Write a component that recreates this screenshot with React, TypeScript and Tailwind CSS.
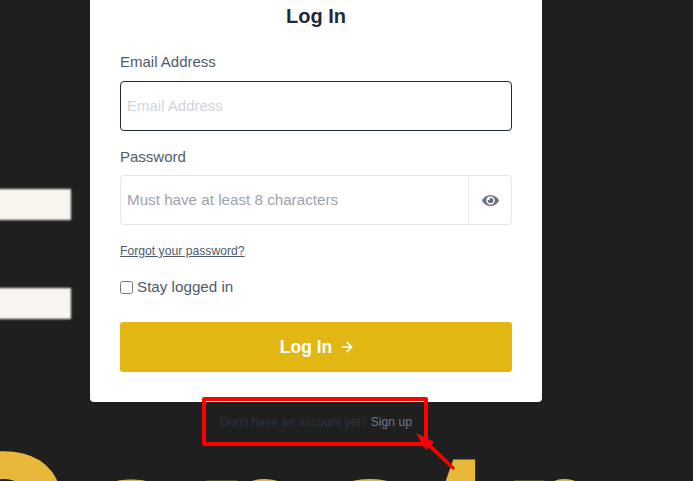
import { ArrowRight } from "lucide-react";

export default function App() {
  return (
    <div className="relative h-[481px] w-[693px] overflow-hidden bg-[#1f1f1f] font-['Liberation_Sans',sans-serif]">
      {/* blurred page behind the dialog */}
      <div className="absolute left-[-10px] top-[189px] h-[31px] w-[81px] bg-[#f9f4ee] blur-[0.8px]" />
      <div className="absolute left-[-10px] top-[288px] h-[31px] w-[81px] bg-[#f9f4ee] blur-[0.8px]" />
      <div className="absolute left-[-64px] top-[429px] whitespace-nowrap text-[175px] leading-none font-bold tracking-[15px] text-[#e8b83a] blur-[0.7px] [-webkit-text-stroke:8px_#e8b83a]">
        Construction
      </div>

      <div className="relative ml-[90px] flex h-[402px] w-[452px] flex-col rounded-b bg-white px-[30px] text-[#4f5b6b]">
        <h1 className="mt-[3px] text-center text-[20px] leading-[26px] font-semibold text-[#1f2937]">Log In</h1>

        <label className="mt-[23px] text-[15px] leading-[20px]">Email Address</label>
        <div className="mt-[9px] flex h-[50px] items-center rounded border border-[#1f2937] px-[6px] text-[15px] text-[#d1d5db]">
          Email Address
        </div>

        <label className="mt-[16px] text-[15px] leading-[20px]">Password</label>
        <div className="mt-[8px] flex h-[50px] rounded border border-[#e5e7eb] text-[15.2px] text-[#9ca3af]">
          <div className="flex flex-1 items-center px-[6px] pt-[1px]">Must have at least 8 characters</div>
          <div className="flex w-[43px] items-center justify-center border-l border-[#e5e7eb]">
            <svg viewBox="0 0 576 512" className="h-[15px] w-[19px] fill-[#6b7280]">
              <path d="M572.5 241.4C518.3 135.6 410.9 64 288 64S57.7 135.6 3.5 241.4a32.4 32.4 0 0 0 0 29.2C57.7 376.4 165.1 448 288 448s230.3-71.6 284.5-177.4a32.4 32.4 0 0 0 0-29.2zM288 400a144 144 0 1 1 144-144 143.9 143.9 0 0 1-144 144zm0-240a95.3 95.3 0 0 0-25.3 3.8 47.9 47.9 0 0 1-66.9 66.9A95.8 95.8 0 1 0 288 160z" />
            </svg>
          </div>
        </div>

        <a className="mt-[18px] self-start text-[12.2px] leading-[16px] underline">Forgot your password?</a>

        <label className="mt-[18px] flex items-center text-[15.2px] leading-[20px]">
          <span className="mr-[4px] h-[13px] w-[13px] rounded-[2.5px] border border-[#767676] bg-white" />
          Stay logged in
        </label>

        <button className="mt-[25px] flex h-[50px] items-center justify-center gap-[7px] rounded-[3px] bg-[#e2b714] pl-[3px] text-[17.5px] font-semibold text-white">
          Log In
          <ArrowRight size={16} strokeWidth={2.5} />
        </button>
      </div>

      <p className="relative mt-[12px] ml-[220px] text-[12.2px] leading-[16px] text-[#2b3341]">
        Don't have an account yet? <span className="text-[#6b7a94]">Sign up</span>
      </p>

      {/* annotation */}
      <div className="absolute left-[202px] top-[397px] h-[49px] w-[226px] rounded-[2px] border-4 border-[#ff0000]" />
      <svg className="absolute left-[410px] top-[428px]" width="50" height="46" viewBox="0 0 50 46">
        <path d="M43 40 L20 18" stroke="#ff0000" strokeWidth="3.5" strokeLinecap="round" />
        <path d="M6 5 L24 14 L16 22 Z" fill="#ff0000" />
      </svg>
    </div>
  );
}
